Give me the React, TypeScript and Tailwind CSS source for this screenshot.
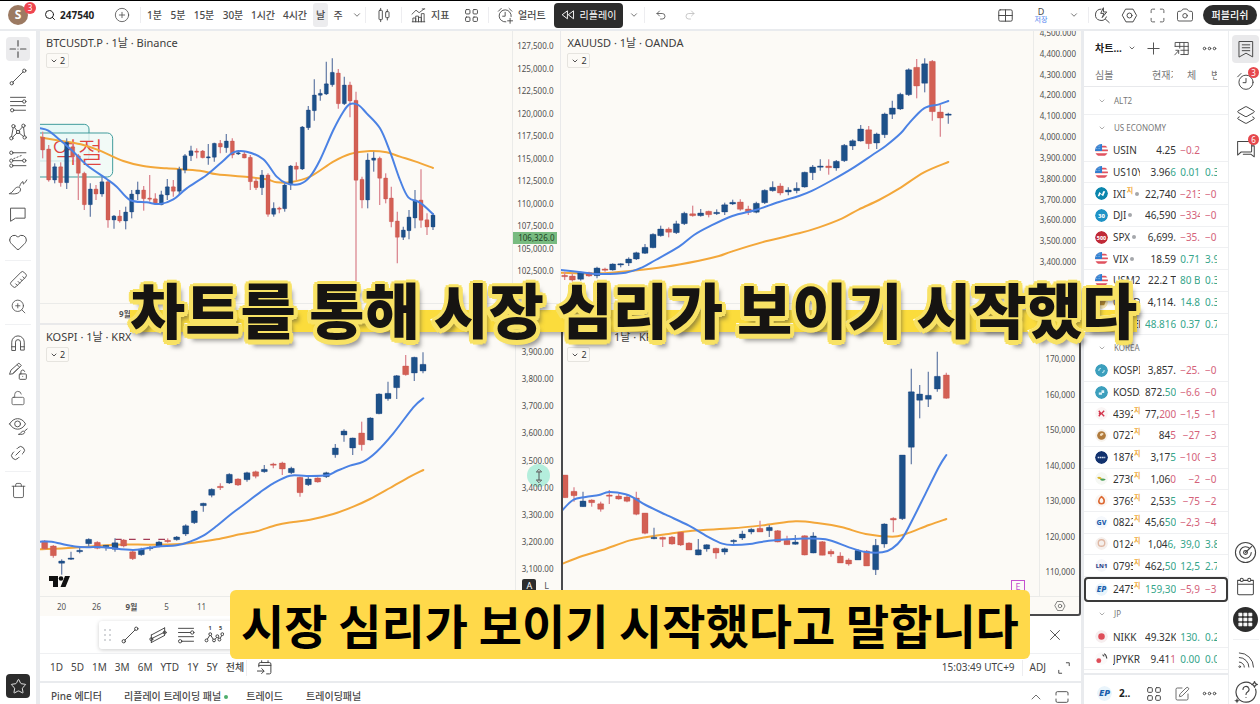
import type { ReactNode } from "react";
import {
  Calendar,
  Camera,
  ChevronDown,
  ChevronUp,
  CirclePlus,
  Heart,
  Layers2,
  Link2,
  LockOpen,
  Maximize,
  Redo2,
  Ruler,
  Search,
  SquarePen,
  Star,
  Trash,
  Undo2,
  X,
  ZoomIn,
} from "lucide-react";

/* ---------- icons ---------- */

function Icon({ size = 20, children, sw = 1.15 }: { size?: number; children: ReactNode; sw?: number }) {
  return (
    <svg
      width={size}
      height={size}
      viewBox="0 0 24 24"
      fill="none"
      stroke="currentColor"
      strokeWidth={sw}
      strokeLinecap="round"
      strokeLinejoin="round"
      aria-hidden="true"
    >
      {children}
    </svg>
  );
}

const CrossIcon = () => (
  <Icon size={20} sw={1.4}>
    <path d="M12 2v6.500M12 15.500V22M2.500 12H9M15 12h6.500M12 12h.01" />
  </Icon>
);
const TrendIcon = () => (
  <Icon>
    <circle cx="4.500" cy="19.500" r="2" />
    <circle cx="19.500" cy="4.500" r="2" />
    <path d="M6 18L18 6" />
  </Icon>
);
const FibIcon = () => (
  <Icon>
    <path d="M3 4h18M3 9h14.500M3 14h18M7 19.500h14" />
    <circle cx="19.500" cy="9" r="2" />
    <circle cx="5" cy="19.500" r="2" />
  </Icon>
);
const PatternIcon = () => (
  <Icon>
    <circle cx="4" cy="19.500" r="2" />
    <circle cx="6.500" cy="5" r="2" />
    <circle cx="12" cy="12" r="2" />
    <circle cx="18.500" cy="4.500" r="2" />
    <circle cx="20" cy="18.500" r="2" />
    <path d="M4.300 17.500L6.200 7M7.900 6.500l2.800 4M13.300 10.500L17.300 6M18.700 6.500l1.100 10M5.500 18.300l5.200-5M13.500 13.300l5 4" />
  </Icon>
);
const ForecastIcon = () => (
  <Icon>
    <circle cx="4" cy="4.500" r="2" />
    <circle cx="4" cy="14" r="2" />
    <circle cx="4" cy="20" r="2" />
    <circle cx="19.500" cy="14" r="2" />
    <path d="M6 4.500h15.500M6 20h15.500M6 14h11.500" />
    <path d="M7 11.500l11-4.500" strokeDasharray="1.500 2.500" />
  </Icon>
);
const BrushIcon = () => (
  <Icon>
    <path d="M2 20c4 .5 12 1 13-4.500.5-3-3-4.500-5.500-2.500C6 15.500 6.500 18 2 20z" />
    <path d="M14 11c1-3 2.500-5 4-5.500l.5 3c1.500-1 3-3 4-5" />
  </Icon>
);
const CommentIcon = () => (
  <Icon>
    <path d="M3.500 5h17v12H9l-5.500 3.500z" />
  </Icon>
);
const MagnetIcon = () => (
  <Icon>
    <path d="M4.500 20.500V11a7.500 7.500 0 0 1 15 0v9.500H15V11a3 3 0 0 0-6 0v9.500zM4.500 16.500H9M15 16.500h4.500" />
  </Icon>
);
const PencilLockIcon = () => (
  <Icon>
    <path d="M2 15.500L3.500 11 13 2.500l3 3L6 15zM11 4.500l3 3M12 9l-6 6" />
    <rect x="13.500" y="15.500" width="8.500" height="6.500" rx="1" />
    <path d="M15.500 15.500V13a2.300 2.300 0 0 1 4.500-.5M17.700 18.500h.01" />
  </Icon>
);
const EyeBrushIcon = () => (
  <Icon>
    <path d="M2 9.500c4.500-8.500 14.500-8.500 19 0-4.500 8.500-14.500 8.500-19 0z" />
    <circle cx="11.500" cy="9.500" r="3.500" />
    <path d="M13 22c3 .4 6.500 0 7-2.200.3-1.600-2-2.200-3.300-1C15 20 15.500 21.500 13 22zM20 18l3-2.500" />
  </Icon>
);
const CandlesIcon = () => (
  <Icon size={16} sw={1.400}>
    <path d="M7 2v3M7 19v3M17 4v3M17 16v3.500" />
    <rect x="4.500" y="5" width="5" height="14" rx="1" />
    <rect x="14.500" y="7" width="5" height="9" rx="1" />
  </Icon>
);
const IndicatorsIcon = () => (
  <Icon size={15} sw={1.400}>
    <path d="M1.500 10L8 3.500l5 4L21 1.500M18 1.500h4" />
    <path d="M3 22v-6h4.500v6M7.500 22v-9h4.500v9M12 22v-7h4.500v7M16.500 22V9H21v13M2 22h20" />
  </Icon>
);
const FourSquares = ({ size = 15 }: { size?: number }) => (
  <Icon size={size} sw={1.500}>
    <rect x="2.500" y="2.500" width="7" height="7" rx="1.500" />
    <rect x="14.500" y="2.500" width="7" height="7" rx="1.500" />
    <rect x="2.500" y="14.500" width="7" height="7" rx="1.500" />
    <rect x="14.500" y="14.500" width="7" height="7" rx="1.500" />
  </Icon>
);
const AlertPlusIcon = () => (
  <Icon size={17} sw={1.300}>
    <path d="M20 13.500A8.500 8.500 0 1 0 12.500 21M11.500 7.500V13H8M2 6l4-4M17 2l4 4M18.500 16v7M15 19.500h7" />
  </Icon>
);
const AlarmIcon = () => (
  <Icon size={20}>
    <circle cx="12" cy="13.500" r="8.500" />
    <path d="M12 9v5H8.500M2 7l4-4M18 3l4 4" />
  </Icon>
);
const RewindIcon = () => (
  <Icon size={14} sw={1.600}>
    <path d="M11 5.500v13L2.500 12zM21.500 5.500v13L13 12z" />
  </Icon>
);
const HexIcon = ({ size = 17 }: { size?: number }) => (
  <Icon size={size} sw={1.400}>
    <path d="M7 3h10l5 9-5 9H7l-5-9z" />
    <circle cx="12" cy="12" r="3.500" />
  </Icon>
);
const LayoutIcon = () => (
  <Icon size={17} sw={1.400}>
    <rect x="2.500" y="4" width="19" height="16" rx="2" />
    <path d="M12 4v16M2.500 12h19" />
  </Icon>
);
const QuickIcon = () => (
  <Icon size={17} sw={1.400}>
    <path d="M10 3a8 8 0 1 0 7.500 11M16 17l5.500 5M13 1.500L9.500 9H14l-2.500 6L18 7h-4z" />
  </Icon>
);
const TableArrowIcon = () => (
  <Icon size={17} sw={1.300}>
    <path d="M3 9V3.500h18.500v17H11M3 9h18.500M9.500 3.500v8M15.500 3.500v17M11 14.500h10.500M2.500 21l5.500-6M4 14.500h4v4.500" />
  </Icon>
);
const DotsIcon = () => (
  <Icon size={15} sw={1.600}>
    <circle cx="4" cy="12" r="2" />
    <circle cx="12" cy="12" r="2" />
    <circle cx="20" cy="12" r="2" />
  </Icon>
);
const BookmarkListIcon = () => (
  <Icon size={20}>
    <path d="M4 3h16v18.500L12 17l-8 4.500zM7.500 7h9M7.500 10.500h9M7.500 14h9" />
  </Icon>
);
const ChatIcon = () => (
  <Icon size={21}>
    <path d="M3 4h15a1 1 0 0 1 1 1v10a1 1 0 0 1-1 1H7l-4 3.500zM19.500 9H22v12.500L18 18.500H9.500" />
  </Icon>
);
const TargetIcon = () => (
  <Icon size={23}>
    <circle cx="12" cy="12" r="10.500" />
    <path d="M16.500 8A6 6 0 1 0 18 12M12 12l6.500-6.500" />
    <circle cx="12" cy="12" r="2" />
  </Icon>
);
const CalendarRingsIcon = () => (
  <Icon size={21}>
    <path d="M6 5H3v15a1.500 1.500 0 0 0 1.500 1.500h15A1.500 1.500 0 0 0 21 20V5h-3M9.500 5h5M3 9.500h18" />
    <circle cx="7.700" cy="4.500" r="1.800" />
    <circle cx="16.300" cy="4.500" r="1.800" />
  </Icon>
);
const BroadcastIcon = () => (
  <Icon size={20}>
    <path d="M4 14.500a6 6 0 0 1 6 6M4 9a11.500 11.500 0 0 1 11.500 11.500M4 3.500a17 17 0 0 1 17 17" />
    <circle cx="4.500" cy="20" r="1" />
  </Icon>
);
const HelpIcon = () => (
  <Icon size={24}>
    <path d="M17 3.500A10 10 0 1 0 21.500 9M9 9.500a3 3 0 1 1 4.500 2.500c-1 .6-1.500 1.200-1.500 2.500M12 17.500h.01M20.500 1.500l.9 2 2 .9-2 .9-.9 2-.9-2-2-.9 2-.9z" />
    <path d="M3 18l.8 2 2 .8-2 .8-.8 2-.8-2-2-.8 2-.8z" fill="currentColor" stroke="none" />
  </Icon>
);
const ChannelIcon = () => (
  <Icon>
    <path d="M4 12L20 3.500M4 12v9M20 3.500v8M4 16.500l16-8M4 21l16-8.500" />
    <circle cx="4" cy="17" r="1.800" />
    <circle cx="20" cy="9" r="1.800" />
  </Icon>
);
const GoDateIcon = () => (
  <Icon size={17} sw={1.400}>
    <path d="M4 11V7a2 2 0 0 1 2-2h13a2 2 0 0 1 2 2v12a2 2 0 0 1-2 2h-4M4 9h17M8 2.500V5M17 2.500V5M2 17h9M8 13.500l3.500 3.500L8 20.500" />
  </Icon>
);

function ElliottIcon() {
  return (
    <svg width="22" height="22" viewBox="0 0 24 24" fill="none" stroke="currentColor" strokeWidth="1.200" aria-hidden="true">
      <path d="M3 18.500l4.500-7 4.500 7 4-4.500 3 3L22 11" />
      <g fill="#fff">
        <circle cx="3" cy="18.500" r="1.700" />
        <circle cx="7.500" cy="11" r="1.700" />
        <circle cx="12" cy="18.500" r="1.700" />
        <circle cx="16" cy="13.500" r="1.700" />
        <circle cx="18.500" cy="17.500" r="1.700" />
        <circle cx="22" cy="11" r="1.700" />
      </g>
      <text x="5.500" y="6" fontSize="6.500" fontWeight="700" fill="currentColor" stroke="none">1</text>
      <text x="18" y="6" fontSize="6.500" fontWeight="700" fill="currentColor" stroke="none">5</text>
    </svg>
  );
}

/* ---------- chart data: [x, high, top, bottom, low, up], three units to a pixel ---------- */

type Candle = [number, number, number, number, number, number];
type Pt = [number, number];

const btc: Candle[] = [
  [128,395,412,450,475,0],[146,435,447,540,545,0],[164,490,500,540,550,1],[182,487,500,548,560,0],[200,415,427,548,567,1],
  [218,430,440,470,480,0],[235,462,467,520,600,0],[253,515,520,614,630,0],[271,550,567,614,650,1],[288,555,567,582,600,0],
  [306,525,545,582,590,1],[324,540,545,660,683,0],[342,645,648,660,686,1],[359,630,648,663,668,0],[377,620,636,663,688,1],
  [395,570,582,636,655,1],[413,545,570,582,600,1],[431,558,570,596,632,0],[449,525,594,598,605,0],[466,580,596,612,615,0],
  [484,572,584,614,616,1],[502,537,560,585,600,1],[520,540,560,574,590,0],[538,500,508,574,585,1],[555,462,467,510,520,1],
  [573,437,452,467,483,1],[590,445,453,456,475,0],[608,450,453,473,475,0],[625,432,470,473,494,1],[643,428,430,472,485,1],
  [661,420,430,441,460,0],[679,402,423,443,458,1],[697,415,423,465,475,0],[715,450,458,461,465,1],[733,455,462,474,475,0],
  [751,465,472,545,570,0],[768,535,543,563,570,0],[786,510,525,563,585,1],[804,520,525,643,650,0],[821,607,625,643,650,1],
  [838,620,624,627,640,0],[854,550,555,626,635,1],[872,495,498,555,570,1],[889,487,498,508,540,0],[907,378,381,507,510,1],
  [925,318,330,383,390,1],[943,238,285,332,362,1],[961,268,280,286,302,1],[979,185,251,282,285,1],[997,175,217,254,260,1],
  [1015,207,219,311,326,0],[1033,230,255,311,315,1],[1050,245,255,303,352,0],[1068,275,301,541,850,0],[1086,530,538,600,625,0],
  [1103,460,480,600,625,1],[1121,455,474,481,515,1],[1139,470,475,535,615,0],[1157,520,534,597,610,0],[1174,560,594,665,682,0],
  [1192,635,663,712,790,0],[1210,680,690,712,720,1],[1227,630,651,692,718,1],[1245,570,600,654,685,1],[1263,508,600,661,683,0],
  [1281,640,659,681,705,0],[1299,640,645,681,690,1],
];
const btcFast: Pt[] = [[120,385],[145,392],[180,420],[220,455],[260,495],[320,537],[350,560],[390,600],[440,607],[480,612],[520,598],[560,565],[620,525],[670,482],[700,457],[740,455],[790,478],[830,530],[860,550],[900,552],[930,530],[960,480],[1000,390],[1030,335],[1050,312],[1075,315],[1100,340],[1140,385],[1170,455],[1200,540],[1225,592],[1260,608],[1299,642]];
const btcSlow: Pt[] = [[120,412],[200,425],[250,435],[300,452],[370,483],[430,498],[500,505],[600,512],[650,523],[750,532],[800,538],[830,547],[870,547],[930,530],[1000,485],[1050,462],[1110,453],[1160,457],[1200,470],[1245,484],[1299,504]];

const gold: Candle[] = [
  [1697,815,826,829,840,0],[1720,820,828,840,845,0],[1745,815,818,838,842,1],[1770,815,818,828,830,0],[1794,800,804,827,835,1],
  [1818,803,807,810,815,0],[1841,790,792,810,812,1],[1865,790,791,795,802,1],[1889,772,777,789,798,1],[1912,755,758,777,780,1],
  [1938,732,742,760,762,1],[1962,700,703,743,745,1],[1985,677,687,707,710,1],[2009,682,687,697,712,0],[2032,662,671,698,702,1],
  [2056,635,640,671,675,1],[2081,617,641,647,650,0],[2105,627,639,647,650,1],[2129,632,634,644,652,0],[2153,628,637,640,645,1],
  [2177,608,614,636,645,1],[2201,599,607,612,615,1],[2224,598,606,628,632,0],[2248,617,627,637,645,0],[2272,605,610,637,640,1],
  [2297,568,571,608,612,1],[2321,544,562,572,575,1],[2344,550,558,579,586,0],[2368,562,570,576,586,1],[2393,547,565,572,580,1],
  [2417,515,517,561,563,1],[2441,495,501,518,540,1],[2464,478,498,501,512,1],[2489,478,498,503,524,0],[2512,480,484,504,512,1],
  [2536,432,436,482,486,1],[2561,418,422,438,450,1],[2585,375,387,423,425,1],[2609,378,389,431,447,0],[2633,398,402,429,447,1],
  [2657,338,342,404,414,1],[2680,302,324,343,357,1],[2704,278,283,327,330,1],[2729,205,209,284,288,1],[2753,177,202,258,295,0],
  [2777,175,191,250,277,1],[2800,180,184,335,362,0],[2824,315,336,354,410,0],[2848,338,342,346,371,1],
];
const goldFast: Pt[] = [[1685,810],[1740,816],[1800,822],[1880,818],[1930,802],[1970,780],[2040,740],[2085,705],[2130,680],[2200,648],[2270,630],[2340,606],[2400,588],[2440,572],[2500,540],[2560,505],[2620,465],[2660,438],[2705,400],[2730,370],[2775,325],[2820,313],[2848,303]];
const goldSlow: Pt[] = [[1685,818],[1800,820],[1900,812],[2000,800],[2100,782],[2160,768],[2200,754],[2300,724],[2400,700],[2460,682],[2530,655],[2580,628],[2640,600],[2700,566],[2775,517],[2848,486]];

const kospi: Candle[] = [
  [134,1620,1623,1646,1650,0],[160,1635,1638,1667,1673,0],[185,1678,1683,1690,1724,1],[213,1655,1674,1676,1680,1],[239,1640,1651,1654,1660,1],
  [266,1615,1618,1631,1640,1],[292,1624,1627,1645,1648,0],[318,1635,1636,1638,1652,1],[345,1615,1628,1648,1655,1],[371,1617,1620,1638,1642,0],
  [398,1650,1655,1676,1680,0],[424,1643,1647,1664,1667,1],[450,1638,1642,1645,1652,1],[477,1622,1626,1638,1642,1],[503,1615,1621,1623,1628,0],
  [530,1608,1611,1619,1622,1],[557,1573,1577,1602,1608,1],[583,1530,1533,1568,1572,1],[610,1508,1510,1517,1535,1],[635,1465,1468,1486,1492,1],
  [661,1450,1459,1461,1470,0],[688,1420,1423,1449,1452,1],[714,1435,1437,1455,1458,0],[741,1415,1418,1439,1445,1],[767,1412,1415,1429,1435,0],
  [793,1395,1408,1415,1418,1],[820,1388,1392,1395,1405,0],[847,1385,1389,1407,1425,0],[874,1400,1405,1418,1422,1],[900,1430,1432,1478,1490,0],
  [925,1430,1437,1454,1458,1],[953,1432,1434,1446,1448,0],[979,1415,1418,1430,1434,1],[1006,1332,1344,1364,1373,1],[1032,1288,1293,1305,1325,1],
  [1058,1313,1314,1344,1365,1],[1085,1265,1299,1334,1352,0],[1111,1252,1254,1320,1322,1],[1137,1180,1182,1241,1243,1],[1164,1145,1180,1196,1202,1],
  [1190,1125,1127,1163,1197,1],[1217,1065,1098,1124,1127,0],[1243,1070,1072,1119,1143,1],[1269,1057,1093,1113,1120,1],
];
const kospiFast: Pt[] = [[120,1625],[155,1625],[200,1635],[240,1641],[310,1642],[400,1650],[470,1640],[530,1636],[570,1625],[610,1607],[650,1578],[690,1545],[730,1515],[780,1477],[820,1450],[870,1427],[920,1428],[980,1426],[1010,1413],[1050,1397],[1090,1385],[1130,1355],[1180,1300],[1240,1222],[1270,1195]];
const kospiSlow: Pt[] = [[120,1648],[220,1643],[350,1634],[450,1634],[540,1632],[590,1627],[650,1618],[720,1603],[770,1594],[830,1575],[880,1566],[930,1559],[1000,1542],[1060,1520],[1110,1497],[1170,1464],[1230,1430],[1270,1410]];

const eco: Candle[] = [
  [1698,1425,1425,1493,1493,0],[1725,1462,1474,1487,1505,0],[1752,1475,1503,1520,1520,1],[1778,1498,1500,1508,1520,0],[1805,1505,1511,1528,1535,0],
  [1831,1470,1485,1487,1512,0],[1859,1482,1488,1497,1499,0],[1884,1485,1491,1504,1507,0],[1912,1475,1494,1543,1546,0],[1938,1539,1539,1600,1603,0],
  [1965,1583,1612,1614,1618,1],[1991,1610,1612,1618,1641,0],[2019,1608,1611,1632,1634,0],[2045,1597,1597,1635,1638,0],[2070,1627,1629,1650,1650,0],
  [2098,1617,1649,1665,1666,1],[2123,1633,1634,1647,1655,1],[2151,1643,1645,1659,1676,0],[2177,1643,1646,1656,1664,1],[2204,1618,1621,1623,1635,1],
  [2230,1592,1602,1614,1620,1],[2257,1585,1588,1596,1603,1],[2283,1562,1585,1596,1596,0],[2311,1575,1582,1592,1611,1],[2336,1590,1592,1626,1627,0],
  [2364,1607,1621,1634,1634,0],[2389,1605,1626,1633,1634,1],[2417,1606,1607,1665,1666,0],[2443,1597,1608,1659,1660,1],[2470,1623,1625,1666,1666,0],
  [2496,1648,1654,1662,1670,0],[2524,1657,1668,1689,1689,0],[2549,1675,1680,1692,1697,0],[2577,1648,1651,1680,1680,1],[2603,1650,1653,1698,1698,0],
  [2630,1617,1636,1709,1725,1],[2656,1570,1572,1632,1643,1],[2683,1552,1555,1560,1597,0],[2710,1365,1365,1556,1560,1],[2737,1106,1175,1342,1393,1],
  [2762,1155,1182,1201,1255,1],[2788,1115,1186,1198,1221,1],[2815,1055,1129,1167,1175,1],[2842,1118,1125,1195,1196,0],
];
const ecoFast: Pt[] = [[1688,1533],[1722,1500],[1760,1491],[1800,1485],[1830,1476],[1880,1483],[1910,1497],[1940,1515],[2000,1544],[2070,1577],[2130,1612],[2170,1631],[2200,1635],[2260,1631],[2310,1622],[2400,1616],[2480,1618],[2550,1642],[2600,1656],[2650,1657],[2680,1645],[2710,1615],[2740,1560],[2780,1480],[2820,1400],[2842,1365]];
const ecoSlow: Pt[] = [[1688,1692],[1750,1668],[1810,1650],[1890,1622],[1940,1612],[2000,1603],[2080,1592],[2200,1585],[2300,1575],[2390,1564],[2460,1570],[2530,1582],[2600,1602],[2680,1610],[2720,1602],[2790,1575],[2842,1557]];

function smooth(p: Pt[]): string {
  let d = `M${p[0][0]} ${p[0][1]}`;
  for (let i = 0; i < p.length - 1; i++) {
    const a = p[i - 1] ?? p[i];
    const b = p[i];
    const c = p[i + 1];
    const e = p[i + 2] ?? c;
    d += `C${b[0] + (c[0] - a[0]) / 6} ${b[1] + (c[1] - a[1]) / 6} ${c[0] - (e[0] - b[0]) / 6} ${c[1] - (e[1] - b[1]) / 6} ${c[0]} ${c[1]}`;
  }
  return d;
}

function Plot({ x, y, w, candles, fast, slow, label, children }: {
  x: number; y: number; w: number; candles: Candle[]; fast: Pt[]; slow: Pt[]; label: string; children?: ReactNode;
}) {
  return (
    <svg className="absolute inset-0 h-full w-full" role="img" aria-label={label}>
      <g transform={`scale(.33333) translate(${-x * 3} ${-y * 3})`}>
        {children}
        <path d={smooth(slow)} fill="none" stroke="#f3a73a" strokeWidth="6" strokeLinecap="round" />
        {candles.map(([cx, hi, top, bot, lo, up]) => (
          <g key={cx}>
            <path d={`M${cx} ${hi}V${lo}`} stroke={up ? "#7186ad" : "#dc8b94"} strokeWidth="4" />
            <rect x={cx - w / 2} y={top} width={w} height={Math.max(bot - top, 4)} rx="1.500" fill={up ? "#1d5189" : "#d36054"} stroke={up ? "#1c3f80" : "#c5504f"} strokeWidth="1" />
          </g>
        ))}
        <path d={smooth(fast)} fill="none" stroke="#4b82e4" strokeWidth="6" strokeLinecap="round" />
      </g>
    </svg>
  );
}

function Legend({ title }: { title: string }) {
  return (
    <div className="absolute top-[5px] left-[6px] flex flex-col items-start gap-[3px]">
      <h2 className="text-[11px] leading-[14px] whitespace-nowrap text-[#3c3c3c]">{title}</h2>
      <button className="flex h-[15px] w-[23px] items-center justify-center gap-[2px] rounded-[2px] border border-[#e6e4df] text-[9px] leading-none text-[#333]">
        <ChevronDown size={8} strokeWidth={2.5} />2
      </button>
    </div>
  );
}

function AxisLabels({ values, className }: { values: string[]; className: string }) {
  return (
    <ul className={`flex flex-col justify-between text-right text-[8px] leading-[12px] text-[#505050] ${className}`}>
      {values.map((v) => <li key={v}>{v}</li>)}
    </ul>
  );
}

/* ---------- watchlist ---------- */

type Row = { s: string; last: string; tail?: string; tone?: "g" | "r"; chg: string; pct: string; icon: string; tag?: boolean; dot?: boolean; sel?: boolean };

const usRows: Row[] = [
  { s: "USIN", last: "4.25", chg: "−0.2", pct: "", icon: "us" },
  { s: "US10Y", last: "3.96", tail: "6", tone: "g", chg: "0.01", pct: "0.3", icon: "us" },
  { s: "IXI", last: "22,740", chg: "−213", pct: "−0", icon: "ixi", tag: true, dot: true },
  { s: "DJI", last: "46,590", chg: "−334", pct: "−0", icon: "30", dot: true },
  { s: "SPX", last: "6,699.", chg: "−35.", pct: "−0", icon: "500", dot: true },
  { s: "VIX", last: "18.59", chg: "0.71", pct: "3.9", icon: "us", dot: true },
  { s: "USM2", last: "22.2 T", chg: "80 B", pct: "0.3", icon: "us" },
  { s: "GOLD", last: "4,114.", chg: "14.8", pct: "0.3", icon: "gold" },
  { s: "SILVER", last: "", tail: "48.816", tone: "g", chg: "0.37", pct: "0.7", icon: "silver" },
];
const krRows: Row[] = [
  { s: "KOSPI", last: "3,857.", chg: "−25.", pct: "−0", icon: "kospi" },
  { s: "KOSDAQ", last: "872.", tail: "50", tone: "g", chg: "−6.6", pct: "−0", icon: "kosdaq" },
  { s: "4392", last: "77,", tail: "200", tone: "r", chg: "−1,5", pct: "−1", icon: "K", tag: true },
  { s: "0727", last: "84", tail: "5", tone: "r", chg: "−27", pct: "−3", icon: "bronze", tag: true },
  { s: "1876", last: "3,17", tail: "5", tone: "g", chg: "−100", pct: "−3", icon: "navy", tag: true },
  { s: "2730", last: "1,06", tail: "0", tone: "r", chg: "−2", pct: "−0", icon: "leaf", tag: true },
  { s: "3769", last: "2,53", tail: "5", tone: "g", chg: "−75", pct: "−2", icon: "flame", tag: true },
  { s: "0822", last: "45,6", tail: "50", tone: "g", chg: "−2,3", pct: "−4", icon: "GV", tag: true },
  { s: "0124", last: "1,04", tail: "6,", tone: "g", chg: "39,0", pct: "3.8", icon: "pale", tag: true },
  { s: "0795", last: "462,", tail: "50", tone: "g", chg: "12,5", pct: "2.7", icon: "LN1", tag: true },
  { s: "2475", last: "", tail: "159,30", tone: "g", chg: "−5,9", pct: "−3", icon: "EP", tag: true, sel: true },
];
const jpRows: Row[] = [
  { s: "NIKK", last: "49.32K", chg: "130.", pct: "0.2", icon: "jp" },
  { s: "JPYKR", last: "9.41", tail: "1", tone: "r", chg: "0.00", pct: "0.0", icon: "jpkr" },
];

function Logo({ kind, size = 13 }: { kind: string; size?: number }) {
  const word = (t: string, fill: string, fs: number, italic = false) => (
    <text x="12" y="16" textAnchor="middle" fontSize={fs} fontWeight="800" fontStyle={italic ? "italic" : "normal"} fill={fill}>{t}</text>
  );
  const disc = (fill: string) => <circle cx="12" cy="12" r="12" fill={fill} />;
  return (
    <svg width={size} height={size} viewBox="0 0 24 24" className="shrink-0 rounded-full" aria-hidden="true">
      {kind === "us" && (<>{disc("#fff")}<path d="M0 3h24v3.500H0zM0 10h24v3.500H0zM0 17h24v4.500H0z" fill="#e0525f" /><path d="M0 0h13v13H0z" fill="#2f7fd1" /><path d="M2 4h9M2 8h9" stroke="#cfe4f8" strokeWidth="1.200" strokeDasharray="1.500 1.500" /></>)}
      {kind === "ixi" && (<>{disc("#0b86ad")}<path d="M5 17l3-8 5 5 2-6h4l-4 9-5-4-2 4z" fill="#fff" /></>)}
      {kind === "30" && (<>{disc("#1f93c6")}{word("30", "#fff", 11)}</>)}
      {kind === "500" && (<>{disc("#c02a38")}{word("500", "#fff", 10)}</>)}
      {kind === "gold" && (<>{disc("#f6e7b5")}<path d="M4 9h16l-3 8H7z" fill="#b98a2a" /></>)}
      {kind === "silver" && (<>{disc("#e3e6ea")}<path d="M4 9h16l-3 8H7z" fill="#8c949d" /></>)}
      {kind === "kospi" && (<>{disc("#3c9fbd")}<path d="M7 13a5 5 0 0 1 4-5M17 11a5 5 0 0 1-4 5" stroke="#b8e4ee" strokeWidth="2" fill="none" /></>)}
      {kind === "kosdaq" && (<>{disc("#3c9fbd")}<path d="M7 16v-4h5V8h5v5h-4v3z" fill="#dff3f8" /></>)}
      {kind === "K" && (<>{disc("#faf5f5")}<path d="M7 7l4 5-4 5M17 7l-5 5 5 5M7 12h5" stroke="#d3324a" strokeWidth="2.500" fill="none" /></>)}
      {kind === "bronze" && (<>{disc("#f7f3ee")}<circle cx="12" cy="12" r="8" fill="#b07a3c" /><path d="M9 12a4 4 0 0 1 7-3l-4 4z" fill="#f3dfc0" /></>)}
      {kind === "navy" && (<>{disc("#12326e")}<path d="M5 12h14" stroke="#d8e2f2" strokeWidth="3" strokeDasharray="3 1" /></>)}
      {kind === "leaf" && (<>{disc("#f6f8f4")}<path d="M4 10c4-3 7 0 9 2-4 2-7 1-9-2z" fill="#d9b62c" /><path d="M9 14c4-3 8-2 11 0-4 3-8 3-11 0z" fill="#4da05a" /></>)}
      {kind === "flame" && (<>{disc("#fbf6f2")}<path d="M12 5c5 3 5 6 5 8a5 5 0 0 1-10 0c0-3 1-5 5-8z" fill="none" stroke="#dd6a34" strokeWidth="3" /></>)}
      {kind === "GV" && (<>{disc("#f5f8fc")}{word("GV", "#1f5fae", 13)}</>)}
      {kind === "pale" && (<>{disc("#f5efec")}<circle cx="12" cy="11" r="6" fill="none" stroke="#dfb8a4" strokeWidth="2.500" /></>)}
      {kind === "LN1" && (<>{disc("#f5f6fa")}{word("LN1", "#2b3f86", 11)}</>)}
      {kind === "EP" && (<>{disc("#e9f4fb")}{word("EP", "#1a60ad", 15, true)}</>)}
      {kind === "jp" && (<>{disc("#f6eeef")}<circle cx="12" cy="12" r="6" fill="#de4d58" /></>)}
      {kind === "jpkr" && (<>{disc("#fbfafa")}<circle cx="7" cy="16" r="4.500" fill="#de4d58" /><path d="M14 5l3 3M17 3l3 3M20 6l2 6" stroke="#444" strokeWidth="2" /></>)}
    </svg>
  );
}

const colour = (v: string) => (v.startsWith("−") ? "text-[#d4627a]" : "text-[#35a58a]");

function WatchRow({ r }: { r: Row }) {
  return (
    <tr className={`flex min-h-0 flex-[217] items-center overflow-hidden text-[10px] leading-[14px] ${r.sel ? "rounded-[4px] border-2 border-[#3a3a3a] pl-[9px]" : "border-b border-[#eff0f2] pl-[11px]"}`}>
      <th scope="row" className="flex w-[50px] shrink-0 items-center text-left font-normal text-[#333]">
        <Logo kind={r.icon} />
        <span className={`ml-[5px] block overflow-hidden whitespace-nowrap ${r.tag && !r.dot ? "w-[20px]" : r.dot ? "" : "w-[27px]"}`}>{r.s}</span>
        {r.tag && <sup className="ml-px text-[7px] leading-none font-bold text-[#f0a93c]">지</sup>}
        {r.dot && <span className="ml-[2px] size-[4px] shrink-0 rounded-full bg-[#a5a7ab]" />}
      </th>
      <td className="flex w-[31px] shrink-0 overflow-hidden whitespace-nowrap">
        <span className="ml-auto text-[#333]">{r.last}<span className={r.tone === "r" ? "text-[#d4627a]" : "text-[#35a58a]"}>{r.tail}</span></span>
      </td>
      <td className={`ml-[4px] flex w-[20px] shrink-0 overflow-hidden whitespace-nowrap ${colour(r.chg)}`}><span className="ml-auto">{r.chg}</span></td>
      <td className={`ml-[5px] w-[12px] shrink-0 overflow-hidden whitespace-nowrap ${colour(r.pct)}`}>{r.pct}</td>
    </tr>
  );
}

function Section({ name, first }: { name: string; first?: boolean }) {
  return (
    <tr className={`flex min-h-0 items-center pl-[14px] ${first ? "flex-[285] border-b border-[#eff0f2]" : "flex-[262]"}`}>
      <th scope="rowgroup" className="flex items-center gap-[8px] text-[8px] font-normal text-[#777]">
        <ChevronDown size={8} strokeWidth={1.8} />{name}
      </th>
    </tr>
  );
}

/* ---------- shared bits ---------- */

function Btn({ label, w = "", children }: { label: string; w?: string; children: ReactNode }) {
  return <button aria-label={label} className={`flex h-[24px] shrink-0 items-center justify-center ${w}`}>{children}</button>;
}
const Sep = () => <div className="h-[16px] w-px shrink-0 bg-[#ededf0]" />;
const Rule = () => <div className="h-px w-[26px] shrink-0 bg-[#f0f1f3]" />;
const thin = { strokeWidth: 1.2 };

function Badge({ n }: { n: string }) {
  return <span className="absolute -top-[2px] right-0 flex size-[11px] items-center justify-center rounded-full bg-[#e5484d] text-[8px] leading-none text-white">{n}</span>;
}

function Header() {
  return (
    <header className="flex h-[28px] shrink-0 items-center bg-white text-[10px] text-[#4a4a4a]">
      <div className="relative flex w-[36px] justify-center">
        <div className="flex size-[20px] items-center justify-center rounded-full bg-[#9c7a62] text-[12px] font-bold text-white">S</div>
        <span className="absolute -top-[3px] right-0 flex size-[12px] items-center justify-center rounded-full bg-[#ef4650] text-[8px] leading-none text-white">3</span>
      </div>
      <button className="flex w-[68px] items-center gap-[4px] pl-[8px] text-[10px] font-bold text-[#1f1f1f]"><Search size={12} strokeWidth={2} />247540</button>
      <Btn label="비교" w="w-[36px]"><CirclePlus size={16} {...thin} /></Btn>
      <Sep />
      <nav className="flex items-center font-medium">
        <button className="w-[27px]">1분</button>
        <button className="w-[20px]">5분</button>
        <button className="w-[32px]">15분</button>
        <button className="w-[26px]">30분</button>
        <button className="w-[34px]">1시간</button>
        <button className="w-[30px]">4시간</button>
        <button className="ml-[3px] h-[24px] w-[15px] rounded-[3px] bg-[#ececee]">날</button>
        <button className="w-[20px]">주</button>
      </nav>
      <Btn label="시간 간격" w="w-[17px]"><ChevronDown size={10} strokeWidth={1.8} /></Btn>
      <Sep />
      <Btn label="차트 유형" w="w-[35px]"><CandlesIcon /></Btn>
      <Sep />
      <button className="flex h-[24px] w-[57px] items-center gap-[5px] pl-[9px] font-medium"><IndicatorsIcon />지표</button>
      <Btn label="템플릿" w="w-[25px]"><FourSquares /></Btn>
      <div className="w-[4px]" />
      <Sep />
      <button className="flex h-[24px] w-[65px] items-center gap-[4px] pl-[8px] font-medium"><AlertPlusIcon />얼러트</button>
      <button className="flex h-[25px] w-[69px] items-center justify-center gap-[5px] rounded-[4px] bg-[#2c2c2c] text-white"><RewindIcon />리플레이</button>
      <Btn label="리플레이 옵션" w="w-[21px]"><ChevronDown size={10} strokeWidth={1.8} /></Btn>
      <Sep />
      <Btn label="되돌리기" w="w-[32px]"><Undo2 size={12} strokeWidth={1.6} /></Btn>
      <div className="text-[#bbb]"><Btn label="다시 하기" w="w-[25px]"><Redo2 size={12} strokeWidth={1.6} /></Btn></div>
      <div className="ml-auto flex items-center">
        <Btn label="레이아웃" w="w-[34px]"><LayoutIcon /></Btn>
        <button className="flex w-[38px] flex-col items-center text-[9px] leading-[9px]"><span>D</span><span className="text-[7px] leading-[8px] text-[#4c7ff0]">저장</span></button>
        <Btn label="레이아웃 관리" w="w-[28px]"><ChevronDown size={10} strokeWidth={1.8} /></Btn>
        <Sep />
        <div className="flex w-[110px] justify-around">
          <Btn label="빠른 검색"><QuickIcon /></Btn>
          <Btn label="설정"><HexIcon /></Btn>
          <Btn label="전체 화면"><Maximize size={17} {...thin} /></Btn>
          <Btn label="스냅샷"><Camera size={18} {...thin} /></Btn>
        </div>
        <button className="mr-[3px] ml-[4px] h-[20px] w-[54px] rounded-full bg-[#2c2c2c] text-[10px] font-medium text-white">퍼블리쉬</button>
      </div>
    </header>
  );
}

function Tools() {
  return (
    <aside className="flex w-[36px] shrink-0 flex-col items-center bg-white py-[6px] text-[#505050]">
      <div className="flex h-[217px] flex-col items-center justify-between">
        <div className="rounded-[4px] bg-[#ebebed]"><Btn label="십자선" w="w-[24px]"><CrossIcon /></Btn></div>
        <Btn label="추세선"><TrendIcon /></Btn>
        <Btn label="피보나치"><FibIcon /></Btn>
        <Btn label="패턴"><PatternIcon /></Btn>
        <Btn label="예측"><ForecastIcon /></Btn>
        <Btn label="브러쉬"><BrushIcon /></Btn>
        <Btn label="텍스트"><CommentIcon /></Btn>
        <Btn label="아이콘"><Heart size={20} {...thin} /></Btn>
      </div>
      <div className="my-[6px]"><Rule /></div>
      <Btn label="측정"><Ruler size={19} {...thin} className="rotate-90" /></Btn>
      <div className="mt-[3px]"><Btn label="확대"><ZoomIn size={17} {...thin} /></Btn></div>
      <div className="my-[6px]"><Rule /></div>
      <div className="flex h-[134px] flex-col items-center justify-between">
        <Btn label="자석"><MagnetIcon /></Btn>
        <Btn label="드로잉 유지"><PencilLockIcon /></Btn>
        <Btn label="잠금"><LockOpen size={16} {...thin} /></Btn>
        <Btn label="숨기기"><EyeBrushIcon /></Btn>
        <Btn label="연결"><Link2 size={18} {...thin} className="-rotate-45" /></Btn>
      </div>
      <div className="my-[6px]"><Rule /></div>
      <Btn label="삭제"><Trash size={17} {...thin} /></Btn>
      <div className="mt-auto rounded-[4px] bg-[#2c2c2c] text-white"><Btn label="즐겨찾기" w="w-[24px]"><Star size={17} {...thin} /></Btn></div>
    </aside>
  );
}

function Charts() {
  return (
    <div className="grid min-h-0 flex-1 grid-cols-[522fr_520fr] grid-rows-[294fr_291fr] bg-[#fcfaf6]">
      <section className="flex min-h-0 flex-col border-r border-b-2 border-[#e9e9ea]">
        <div className="flex min-h-0 flex-1">
          <div className="relative flex-1 overflow-hidden">
            <Plot x={40} y={31} w={12} candles={btc} fast={btcFast} slow={btcSlow} label="BTCUSDT.P">
              <rect x="60" y="373" width="207" height="110" rx="14" fill="#e6f8f6" stroke="#3f9c9c" strokeWidth="3" />
              <rect x="60" y="399" width="278" height="132" rx="16" fill="#effaf8" fillOpacity=".8" stroke="#3f9c9c" strokeWidth="3" />
              <text x="156" y="490" fontSize="84" fontWeight="300" fill="#e0453f">역절</text>
            </Plot>
            <Legend title="BTCUSDT.P · 1날 · Binance" />
          </div>
          <div className="relative w-[48px] overflow-hidden border-l border-[#ebebe9]">
            <AxisLabels className="mt-[9px] h-[237px] pr-[7px]" values={["127,500.0","125,000.0","122,500.0","120,000.0","117,500.0","115,000.0","112,500.0","110,000.0","107,500.0","105,000.0","102,500.0"]} />
            <span className="absolute top-[201px] left-0 h-[12px] w-[44px] bg-[#78bb80] pr-[3px] text-right text-[8px] leading-[12px] text-[#1f4426]">106,326.0</span>
          </div>
        </div>
        <div className="h-[20px] border-t border-[#ebebe9] pl-[79px] text-[8px] leading-[20px] font-bold text-[#555]">9월</div>
      </section>

      <section className="flex min-h-0 flex-col border-b-2 border-[#e9e9ea]">
        <div className="flex min-h-0 flex-1">
          <div className="relative flex-1 overflow-hidden">
            <Plot x={562} y={31} w={18} candles={gold} fast={goldFast} slow={goldSlow} label="XAUUSD" />
            <Legend title="XAUUSD · 1날 · OANDA" />
          </div>
          <div className="w-[48px] overflow-hidden border-l border-[#ebebe9]">
            <AxisLabels className="-mt-[4px] h-[241px] pr-[5px]" values={["4,500.000","4,400.000","4,300.000","4,200.000","4,100.000","4,000.000","3,900.000","3,800.000","3,700.000","3,600.000","3,500.000","3,400.000"]} />
          </div>
        </div>
        <div className="h-[20px] border-t border-[#ebebe9]" />
      </section>

      <section className="flex min-h-0 flex-col">
        <div className="flex min-h-0 flex-1">
          <div className="relative flex-1 overflow-hidden">
            <Plot x={40} y={325} w={18} candles={kospi} fast={kospiFast} slow={kospiSlow} label="KOSPI">
              <path d="M345 1618h20M387 1618h20M430 1618h20M475 1618h20" stroke="#a33b55" strokeWidth="4" />
            </Plot>
            <Legend title="KOSPI · 1날 · KRX" />
            <svg className="absolute bottom-[8px] left-[8px]" width="23" height="13" viewBox="0 0 23 13" aria-hidden="true">
              <path d="M1 1h9v11H5V6H1z" fill="#111" />
              <circle cx="13" cy="3.500" r="2.300" fill="#111" />
              <path d="M17 1h5l-4.500 11h-5z" fill="#111" />
            </svg>
          </div>
          <div className="relative w-[46px] overflow-hidden border-l border-[#ebebe9]">
            <span className="absolute top-[139px] left-[11px] flex size-[23px] items-center justify-center rounded-full bg-[#b4eedc] text-[#555]">
              <Icon size={16} sw={1.5}><path d="M12 6v12M8.500 5.500L12 2l3.500 3.500zM8.500 18.500L12 22l3.500-3.500z" fill="#e4fbf3" /></Icon>
            </span>
            <AxisLabels className="relative mt-[21px] h-[229px] pr-[8px]" values={["3,900.00","3,800.00","3,700.00","3,600.00","3,500.00","3,400.00","3,300.00","3,200.00","3,100.00"]} />
            <div className="mt-[4px] flex gap-[2px] pl-[6px] text-[9px] leading-[14px]">
              <button className="w-[14px] rounded-[2px] bg-[#2c2c2c] text-white">A</button>
              <button className="w-[16px] text-[#555]">L</button>
            </div>
          </div>
        </div>
        <ol className="flex h-[20px] items-center border-t border-[#ebebe9] pl-[4px] text-[8px] text-[#555]">
          {["20", "26", "9월", "5", "11"].map((t) => (
            <li key={t} className={`w-[35px] text-center ${t.endsWith("월") ? "font-bold" : ""}`}>{t}</li>
          ))}
        </ol>
      </section>

      <section className="flex min-h-0 flex-col rounded-br-[3px] border-2 border-[#4a4a4c]">
        <div className="flex min-h-0 flex-1">
          <div className="relative flex-1 overflow-hidden">
            <Plot x={564} y={327} w={18} candles={eco} fast={ecoFast} slow={ecoSlow} label="247540" />
            <div className="absolute -top-[2px] -left-[2px]"><Legend title="247540 · 1날 · KRX" /></div>
            <span className="absolute right-[14px] bottom-[2px] size-[14px] border border-[#c452d0] text-center text-[9px] leading-[12px] text-[#c452d0]">E</span>
          </div>
          <div className="w-[40px] overflow-hidden border-l border-[#ebebe9]">
            <AxisLabels className="mt-[26px] h-[225px] pr-[4px]" values={["170,000","160,000","150,000","140,000","130,000","120,000","110,000"]} />
          </div>
        </div>
        <div className="flex h-[18px] items-center justify-end border-t border-[#ebebe9] pr-[13px] text-[#555]"><HexIcon size={12} /></div>
      </section>
    </div>
  );
}

function BottomBars() {
  return (
    <>
      <div className="flex h-[37px] shrink-0 items-center bg-white pr-[17px] pl-[59px] text-[#444]">
        <div className="flex h-[28px] items-center gap-[8px] rounded-[3px] bg-white pr-[200px] shadow-[0_1px_4px_rgba(0,0,0,0.2)]">
          <svg width="13" height="14" viewBox="0 0 13 14" fill="#c6c8cc" aria-hidden="true">
            {[2, 7, 12].map((y) => [6, 11].map((x) => <circle key={`${x}-${y}`} cx={x} cy={y} r="1" />))}
          </svg>
          <Btn label="추세선" w="w-[20px]"><TrendIcon /></Btn>
          <Btn label="채널" w="w-[20px]"><ChannelIcon /></Btn>
          <Btn label="피보나치" w="w-[20px]"><FibIcon /></Btn>
          <Btn label="엘리엇" w="w-[20px]"><ElliottIcon /></Btn>
        </div>
        <div className="ml-auto"><Btn label="닫기"><X size={18} {...thin} /></Btn></div>
      </div>
      <div className="flex h-[28px] shrink-0 items-center border-t border-[#eff0f2] bg-white px-[10px] text-[10px] text-[#444]">
        <div className="flex gap-[8px]">
          {["1D", "5D", "1M", "3M", "6M", "YTD", "1Y", "5Y"].map((t) => <button key={t}>{t}</button>)}
          <button className="font-medium">전체</button>
        </div>
        <div className="mr-[8px] ml-[2px]"><Sep /></div>
        <Btn label="날짜로 이동" w="w-[18px]"><GoDateIcon /></Btn>
        <span className="ml-auto">15:03:49 UTC+9</span>
        <div className="mx-[7px]"><Sep /></div>
        <button>ADJ</button>
        <div className="ml-[11px]"><Btn label="창 최대화" w="w-[14px]"><Icon size={14} sw={1.6}><path d="M16 3h5v5M3 16v5h5" /></Icon></Btn></div>
      </div>
      <footer className="mt-[2px] flex h-[21px] shrink-0 items-center bg-white px-[11px] pt-[6px] text-[10px] font-medium text-[#4a4a4a]">
        <button>Pine 에디터</button>
        <button className="ml-[22px] flex items-center gap-[3px]">리플레이 트레이딩 패널<span className="size-[4px] rounded-full bg-[#4fae6c]" /></button>
        <button className="ml-[18px]">트레이드</button>
        <button className="ml-[23px]">트레이딩패널</button>
        <div className="ml-auto flex items-center gap-[10px]">
          <ChevronUp size={16} {...thin} />
          <Icon size={16} sw={1.400}><path d="M3 9V6a2 2 0 0 1 2-2h14a2 2 0 0 1 2 2v3M3 15v3a2 2 0 0 0 2 2h14a2 2 0 0 0 2-2v-3" /></Icon>
        </div>
      </footer>
    </>
  );
}

function Watchlist() {
  return (
    <aside className="ml-[3px] flex w-[144px] shrink-0 flex-col bg-white text-[#4a4a4a]">
      <div className="flex h-[34px] shrink-0 items-center pl-[11px]">
        <button className="flex items-center gap-[6px] text-[10px] font-bold text-[#222]">차트...<ChevronDown size={8} strokeWidth={2} /></button>
        <div className="ml-auto flex items-center gap-[12px] pr-[11px]">
          <Btn label="심볼 추가"><Icon size={15} sw={1.500}><path d="M12 3v18M3 12h18" /></Icon></Btn>
          <Btn label="표 보기"><TableArrowIcon /></Btn>
          <Btn label="더 보기"><DotsIcon /></Btn>
        </div>
      </div>
      <table className="flex min-h-0 flex-1 flex-col">
        <thead className="block shrink-0 border-b border-[#e8e9ec]">
          <tr className="flex h-[21px] items-center pl-[11px] text-[10px] text-[#777]">
            <th className="w-[57px] text-left font-normal">심볼</th>
            <th className="w-[21px] overflow-hidden text-left font-normal whitespace-nowrap">현재가</th>
            <th className="ml-[14px] w-[9px] overflow-hidden text-left font-normal">체</th>
            <th className="ml-[15px] w-[6px] overflow-hidden text-left font-normal">변</th>
          </tr>
        </thead>
        <tbody className="flex min-h-0 flex-1 flex-col">
          <Section name="ALT2" first />
          <Section name="US ECONOMY" />
          {usRows.map((r) => <WatchRow key={r.s} r={r} />)}
          <Section name="KOREA" />
          {krRows.map((r) => <WatchRow key={r.s} r={r} />)}
          <Section name="JP" />
          {jpRows.map((r) => <WatchRow key={r.s} r={r} />)}
        </tbody>
      </table>
      <div className="mt-[3px] flex h-[31px] shrink-0 items-center border-t-2 border-[#e9ebee] pt-[8px] pl-[13px]">
        <Logo kind="EP" size={15} />
        <span className="ml-[7px] text-[10px] font-bold text-[#222]">2..</span>
        <div className="ml-auto flex items-center gap-[12px] pr-[11px]">
          <FourSquares size={16} /><SquarePen size={16} {...thin} /><DotsIcon />
        </div>
      </div>
    </aside>
  );
}

function RightRail() {
  return (
    <aside className="flex w-[32px] shrink-0 flex-col items-center border-l border-[#eceef0] bg-white pt-[4px] pl-[2px] text-[#444]">
      <div className="rounded-[4px] bg-[#e9e9eb] py-[2px]"><Btn label="왓치리스트" w="w-[27px]"><BookmarkListIcon /></Btn></div>
      <div className="relative mt-[6px] w-[27px]"><Btn label="얼러트" w="w-full"><AlarmIcon /></Btn><Badge n="3" /></div>
      <div className="mt-[10px]"><Btn label="오브젝트 트리"><Layers2 size={20} {...thin} /></Btn></div>
      <div className="relative mt-[9px] w-[27px]"><Btn label="채팅" w="w-full"><ChatIcon /></Btn><Badge n="6" /></div>
      <div className="mt-auto"><Btn label="스크리너"><TargetIcon /></Btn></div>
      <div className="mt-[10px]"><Btn label="캘린더"><CalendarRingsIcon /></Btn></div>
      <button aria-label="제품" className="mt-[9px] flex size-[25px] items-center justify-center rounded-full bg-[#2c2c2c] text-white">
        <Icon size={17} sw={1}>
          {[3, 10, 17].map((y) => [3, 10, 17].map((x) => <rect key={`${x}-${y}`} x={x} y={y} width="4" height="4" fill="currentColor" />))}
        </Icon>
      </button>
      <div className="mt-[7px]"><Rule /></div>
      <div className="mt-[8px]"><Btn label="스트림"><BroadcastIcon /></Btn></div>
      <div className="mt-[8px]"><Btn label="도움말"><HelpIcon /></Btn></div>
    </aside>
  );
}

export default function App() {
  return (
    <div className="relative flex h-screen flex-col overflow-hidden border-t border-black bg-[#e9ebee] font-['Noto_Sans','Noto_Sans_CJK_KR',sans-serif]">
      <Header />
      <div className="mt-[2px] flex min-h-0 flex-1">
        <Tools />
        <main className="ml-[4px] flex min-w-0 flex-1 flex-col">
          <Charts />
          <BottomBars />
        </main>
        <Watchlist />
        <RightRail />
      </div>

      <div className="absolute top-[267px] left-[130px] whitespace-nowrap">
        <div className="absolute inset-x-0 top-[42px] h-[22px] bg-[#fbdc3c] shadow-[2px_3px_4px_rgba(0,0,0,0.3)]" />
        <p className="relative font-['Noto_Sans_CJK_KR',sans-serif] text-[60px] leading-[80px] font-black text-[#161412] [-webkit-text-stroke:6px_#fffdf2] [paint-order:stroke_fill] [text-shadow:4px_0_0_#f8e264,-4px_0_0_#f8e264,0_5px_0_#f8e264,0_-3px_0_#f8e264,3px_4px_0_#f8e264,-3px_4px_0_#f8e264,3px_-2px_0_#f8e264,-3px_-2px_0_#f8e264,4px_2px_0_#f8e264,-4px_2px_0_#f8e264,5px_7px_4px_rgba(60,60,60,0.5)]">
          차트를 통해 시장 심리가 보이기 시작했다
        </p>
      </div>

      <p className="absolute top-[589px] left-1/2 h-[69px] w-[800px] -translate-x-1/2 rounded-[6px] bg-[#ffd94a] text-center font-['Noto_Sans_CJK_KR',sans-serif] text-[47px] leading-[68px] font-bold whitespace-nowrap text-black">
        시장 심리가 보이기 시작했다고 말합니다
      </p>
    </div>
  );
}
